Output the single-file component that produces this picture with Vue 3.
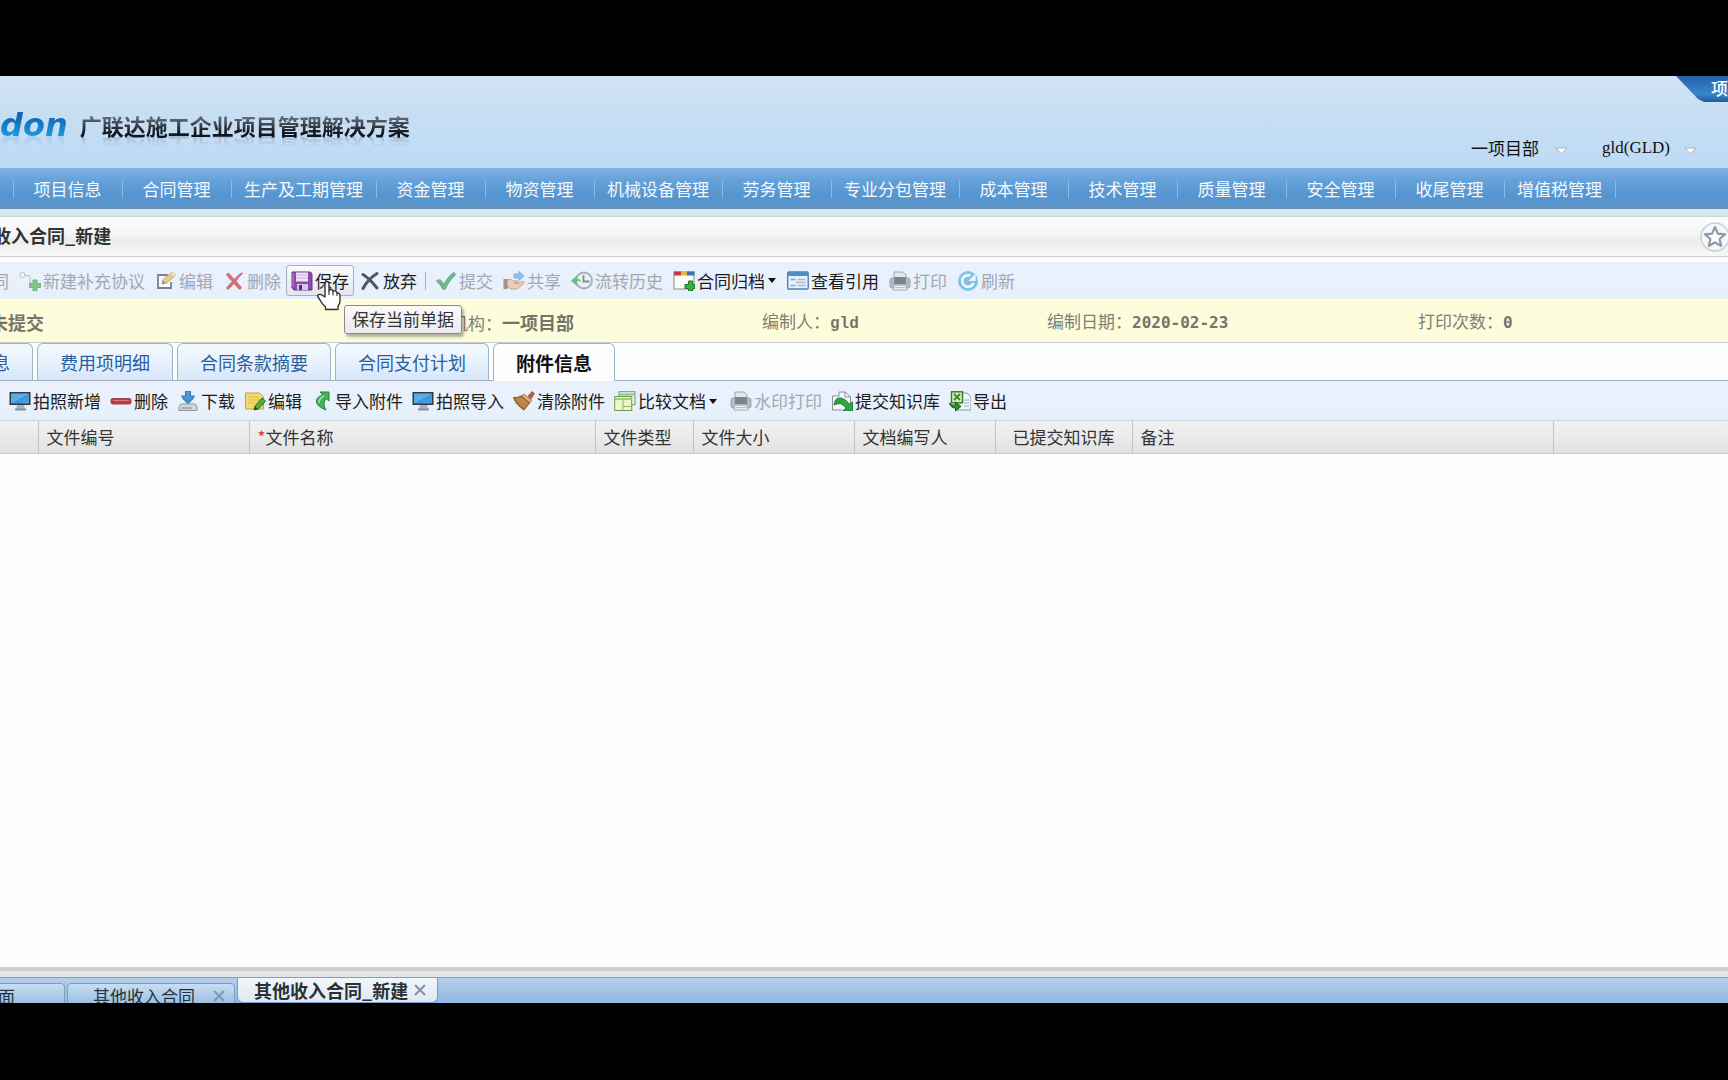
<script setup>
const navItems = [
  '项目信息', '合同管理', '生产及工期管理', '资金管理', '物资管理', '机械设备管理', '劳务管理',
  '专业分包管理', '成本管理', '技术管理', '质量管理', '安全管理', '收尾管理', '增值税管理',
]

const monitor = '<rect x="0.5" y="1" width="21" height="13" fill="#2c3a48"/><rect x="2" y="2.500" width="18" height="10" fill="url(#gScreen)"/><path d="M2 12.500V2.500h18z" fill="#8fcdf5" opacity=".45"/><path d="M8 14h7l1 4H7z" fill="#aab2bb"/><path d="M6 17.500h11v2H6z" fill="#8a939d"/>'
const printer = '<path d="M5 1h9l3 3v4H5z" fill="#dfe2e6" stroke="#6d747c"/><rect x="1" y="7" width="20" height="10" rx="2" fill="#8d959e" stroke="#717982"/><rect x="5" y="6" width="12" height="7" fill="#343c45"/><path d="M5 14h12l1 5H4z" fill="#e6e8ea" stroke="#7d848c"/><path d="M6 16.500h10" stroke="#9aa1a8"/>'
const icons = {
  supplement: '<circle cx="3.500" cy="4" r="2.500" fill="#fff" stroke="#8b96a5"/><path d="M6 4.500h3q2 0 2 2V13q0 2 2 2h2" fill="none" stroke="#8b96a5"/><path d="M14 9h4v3.500h3.500v4H18V20h-4v-3.500h-3.500v-4H14z" fill="#3eae3e" stroke="#268a2b"/>',
  editBox: '<path d="M13 4H3v13h13v-6" fill="#fff" stroke="#2e3a47" stroke-width="1.800"/><path d="M7 13l1-4.500L17 1l3.500 3L12 12z" fill="#f0b04a" stroke="#b07c2c"/><path d="M7 13l1-3.500 2.500 2.500z" fill="#39404a"/><path d="M15.500 2.500L17 1l3.500 3-1.500 1.500z" fill="#f3d6a2"/>',
  redX: '<path d="M3 3.500Q5 1 7 3l4.500 5Q15 3 19 1.500q2 0 .5 1.500Q16 6 13.500 10q3 4 5.500 6.500-1 3-3.500 1.500L11 13q-3 3-5 5.500-3 .5-2.500-2Q6 13 9 10.500 5 7 3 3.500z" fill="#cc1624"/>',
  save: '<path d="M1 1h18.500L21 3v16H3l-2-2z" fill="#8a4aae" stroke="#63308a"/><rect x="5" y="1.500" width="12" height="9" fill="#efe3f6"/><path d="M5 4h12M5 7h12" stroke="#d0b3e0"/><path d="M6 13h11v6H6z" fill="#d9c2e6"/><path d="M8 14h3v5H8z" fill="#5b2a80"/><path d="M2 2v14" stroke="#bd8bda"/>',
  discard: '<path d="M4 3.500Q10 7 18 17M18 2.500Q9 8 4 17.500" fill="none" stroke="#4a5666" stroke-width="3" stroke-linecap="round"/>',
  check: '<path d="M2 10q2-2 4 0l3 4q4-8 10-12l1 2Q14 9 10 18H8Q6 13 2 10z" fill="#1f9a3e" stroke="#1f8a3d" stroke-width="1.600"/>',
  share: '<path d="M11 3h5V0.500l5 4.500-5 4.500V7h-5z" fill="#4ea3e0" stroke="#2c7fc0" stroke-width=".8"/><path d="M4 9q4-2 7 1h4q1 2-2 2h-2l4 .5 5-2.500q2 1 0 3l-6 5H9l-5-2z" fill="#efb987" stroke="#a8713f"/><rect x="0.500" y="8" width="4" height="10" fill="#6e564a"/>',
  history: '<circle cx="13" cy="9.500" r="8" fill="#eef1f4" stroke="#77828d" stroke-width="1.800"/><path d="M12.500 4v6.500h6" fill="none" stroke="#414b56" stroke-width="1.800"/><path d="M0 10l6-6v3.500q4 .5 4 3.500-2-1.500-4-1v5z" fill="#1f9a38"/>',
  archive: '<rect x="1" y="1" width="20" height="17" fill="#fcfcf8" stroke="#898c80"/><rect x="1" y="0.500" width="7" height="4" fill="#c23d3d"/><rect x="8" y="0.500" width="6" height="4" fill="#e4b43a"/><rect x="14" y="0.500" width="7.500" height="4" fill="#4370ba"/><path d="M15.500 10h4v3.500H22v4h-2.500V20h-4v-2.500H12v-4h3.500z" fill="#3eae3e" stroke="#207a25"/>',
  view: '<rect x="0.700" y="1" width="20.500" height="17" rx="1" fill="#e6f1fb" stroke="#4c82ad" stroke-width="1.400"/><rect x="1" y="1" width="20" height="4" fill="#4b8fc5"/><path d="M3.500 8.500h5M3.500 14.500h5" stroke="#88a8c4" stroke-width="1.500"/><path d="M10.500 8.500h8M8.500 11.500h10M10.500 14.500h8" stroke="#a9bccd" stroke-width="1.500"/>',
  print: printer,
  refresh: '<circle cx="11" cy="10" r="10" fill="#3fa3da"/><circle cx="11" cy="10" r="5.800" fill="none" stroke="#fff" stroke-width="2.600" stroke-dasharray="27 10" transform="rotate(20 11 10)"/><path d="M18.500 3v7h-7z" fill="#fff"/>',
  monitor,
  minus: '<rect x="1" y="7.500" width="20" height="5.500" rx="1.500" fill="#c03540" stroke="#9c4a54"/><path d="M3 9.500h16" stroke="#dc7a82"/>',
  download: '<path d="M8.500 0h5v5h4L11 11.500 4.500 5h4z" fill="#4a9ad6" stroke="#2c76ae"/><path d="M5.500 6.500L11 12l5.500-5.500" fill="none" stroke="#3c8bc6" stroke-width="2"/><path d="M4 13h14l2 3v3.500H2V16z" fill="#d4d8dd" stroke="#8c939b" stroke-linejoin="round"/><path d="M4.500 17h10" stroke="#7c838b"/>',
  note: '<path d="M1.500 2h14l4 4v12h-18z" fill="#f3dc6b" stroke="#c2a238"/><path d="M4 6h11M4 9h11M4 12h7" stroke="#d9bd55"/><path d="M10 19l1-4 7-8 3.500 3-7 8z" fill="#57ad36" stroke="#2f6c1c"/><path d="M10 19l1-3.500 2.500 2.500z" fill="#333"/>',
  importArrow: '<path d="M9 1h9v9l-3-2.500q-4 5 0 11.500Q4 15 5.500 8.500 7 5 12 4z" fill="#3fb25a" stroke="#278643"/><path d="M8 12q0-5 5-7" fill="none" stroke="#a3e3ae" stroke-width="1.500"/>',
  broom: '<path d="M15 5l4-4.500 2.500 2L18 8z" fill="#c4554a" stroke="#8c5a3a" stroke-width=".7"/><path d="M11 3l8 6.500-2.500 2.500-8.500-7z" fill="#d9b072" stroke="#8a5a2c" stroke-width=".7"/><path d="M8 5l8.500 7L11 19Q3 14 0.500 6.500q4 .5 7.500-1.500z" fill="#b5793f" stroke="#7e5026"/><path d="M4 8l7.500 8M6 7l7 7.500M8.500 7l6 6" stroke="#cf9c60"/>',
  compare: '<rect x="5" y="0.700" width="16" height="13" fill="#eaf6e6" stroke="#5ba36b"/><path d="M5 3.500h16" stroke="#8cc49a" stroke-width="2"/><rect x="0.700" y="5.500" width="17" height="14" fill="#eef6c9" stroke="#6d9b4b"/><path d="M1 8h17" stroke="#a3c87e" stroke-width="2"/><path d="M9 9v10M9 15.500h8" stroke="#8bb36b"/>',
  submitLib: '<path d="M1.500 5V19h18V6l-5-5H8v4z" fill="#f4f6f7" stroke="#8b9298"/><path d="M14 1v5h6" fill="none" stroke="#8b9298"/><path d="M3 14q1-8 7-7 5 1 8 6l3.500-2V20H12l3-3q-3-4-6-4.500-3 0-6 1.500z" fill="#2fa443" stroke="#22813a"/>',
  exportXls: '<path d="M11 2h7l4 4v13H8V10z" fill="#f2f5f8" stroke="#8296a8"/><path d="M15 9h5M15 12h5M15 15h5" stroke="#9eb0c0"/><rect x="2.500" y="0.800" width="11" height="11" fill="#d6efb2" stroke="#307a25" stroke-width="1.400"/><path d="M5 3l6 6M11 3L5 9" stroke="#3a8c2a" stroke-width="1.800"/><path d="M0.500 12q3 3 6 2v-3l5.500 4.500L6.500 20v-3q-5 0-6-5z" fill="#2d8f28" stroke="#14601a"/>',
}

const billActions = [
  { label: '新建补充协议', icon: 'supplement', off: true },
  { label: '编辑', icon: 'editBox', off: true },
  { label: '删除', icon: 'redX', off: true },
  { label: '保存', icon: 'save', hover: true, tip: '保存当前单据' },
  { label: '放弃', icon: 'discard', sep: true },
  { label: '提交', icon: 'check', off: true },
  { label: '共享', icon: 'share', off: true },
  { label: '流转历史', icon: 'history', off: true },
  { label: '合同归档', icon: 'archive', menu: true },
  { label: '查看引用', icon: 'view' },
  { label: '打印', icon: 'print', off: true },
  { label: '刷新', icon: 'refresh', off: true },
]

const fileActions = [
  { label: '拍照新增', icon: 'monitor' },
  { label: '删除', icon: 'minus' },
  { label: '下载', icon: 'download' },
  { label: '编辑', icon: 'note' },
  { label: '导入附件', icon: 'importArrow' },
  { label: '拍照导入', icon: 'monitor' },
  { label: '清除附件', icon: 'broom' },
  { label: '比较文档', icon: 'compare', menu: true },
  { label: '水印打印', icon: 'print', off: true },
  { label: '提交知识库', icon: 'submitLib' },
  { label: '导出', icon: 'exportXls' },
]

const tabs = ['费用项明细', '合同条款摘要', '合同支付计划', '附件信息']
</script>

<template>
  <div class="screen">
    <svg class="defs" width="0" height="0" aria-hidden="true">
      <defs>
        <linearGradient id="gScreen" x1="0" y1="0" x2="1" y2="1">
          <stop offset="0" stop-color="#2f86cc" />
          <stop offset="1" stop-color="#4aa5e6" />
        </linearGradient>
      </defs>
    </svg>
    <div class="app">
      <header class="banner">
        <div class="brand">
          <span class="logo">don</span>
          <h1>广联达施工企业项目管理解决方案</h1>
        </div>
        <div class="account">
          <button type="button">一项目部<svg width="13" height="8" viewBox="0 0 13 8"><path d="M1 1h11L6.500 7z" fill="#fff" stroke="#a9b3bd" /></svg></button>
          <button type="button" class="user">gld(GLD)<svg width="13" height="8" viewBox="0 0 13 8"><path d="M1 1h11L6.500 7z" fill="#fff" stroke="#a9b3bd" /></svg></button>
        </div>
        <div class="corner">项</div>
      </header>

      <nav class="nav">
        <a v-for="n in navItems" :key="n" href="#">{{ n }}</a>
      </nav>

      <div class="titlebar">
        <h2>收入合同_新建</h2>
        <button type="button" class="fav" aria-label="收藏">
          <svg width="30" height="30" viewBox="0 0 30 30">
            <circle cx="15" cy="15" r="14" fill="#f6f7f9" stroke="#cfcfd4" stroke-width="1.500" />
            <path d="M15 5l2.900 6.600 7.100.7-5.400 4.700 1.600 7L15 20.400 8.800 24l1.600-7L5 12.300l7.100-.7z" fill="#fbfcfd" stroke="#8d9cab" stroke-width="2.200" stroke-linejoin="round" />
          </svg>
        </button>
      </div>

      <div class="toolbar bill">
        <button type="button" class="tool off cut" disabled>同</button>
        <template v-for="a in billActions" :key="a.label">
          <button type="button" class="tool" :class="{ off: a.off, hover: a.hover }" :disabled="a.off">
            <svg class="ico" viewBox="0 0 22 20" v-html="icons[a.icon]"></svg>
            <span>{{ a.label }}</span>
            <i v-if="a.menu" class="caret"></i>
            <template v-if="a.tip">
              <span class="tip" role="tooltip">{{ a.tip }}</span>
              <svg class="hand" width="26" height="31" viewBox="0 0 26 31">
                <path d="M9 17V4q0-2.500 2-2.500T13 4v7q0-1.500 1.800-1.500T17 11v1q0-1.500 1.800-1.300T21 12.500v1q3-1 3 2V21q0 3-2 5v3.500H9.500V27Q6 24 4 20l-2-3q-1-2 1-2.500t3.500 1z" fill="#fff" stroke="#333" stroke-width="1.400" stroke-linejoin="round" />
                <path d="M13 11v4M17 12v3.500M21 13.500V16" stroke="#444" stroke-width="1.200" />
                <path d="M10 28.500h11.500" stroke="#bbb" />
              </svg>
            </template>
          </button>
          <span v-if="a.sep" class="sep"></span>
        </template>
      </div>

      <div class="status">
        <div class="state">未提交</div>
        <div>编制机构：<b>一项目部</b></div>
        <div>编制人：<b class="mono">gld</b></div>
        <div>编制日期：<b class="num">2020-02-23</b></div>
        <div>打印次数：<b class="num">0</b></div>
      </div>

      <div class="tabs" role="tablist">
        <button type="button" role="tab" class="tab first">息</button>
        <button v-for="(t, i) in tabs" :key="t" type="button" role="tab" class="tab" :class="{ active: i === 3 }" :aria-selected="i === 3">{{ t }}</button>
      </div>

      <div class="toolbar files">
        <button v-for="a in fileActions" :key="a.label" type="button" class="tool" :class="{ off: a.off }" :disabled="a.off">
          <svg class="ico" viewBox="0 0 22 20" v-html="icons[a.icon]"></svg>
          <span>{{ a.label }}</span>
          <i v-if="a.menu" class="caret"></i>
        </button>
      </div>

      <main class="grid">
        <table>
          <colgroup>
            <col class="c-idx" /><col class="c-no" /><col class="c-name" /><col class="c-type" /><col class="c-size" />
            <col class="c-author" /><col class="c-lib" /><col class="c-memo" /><col />
          </colgroup>
          <thead>
            <tr>
              <th></th>
              <th>文件编号</th>
              <th><em>*</em>文件名称</th>
              <th>文件类型</th>
              <th>文件大小</th>
              <th>文档编写人</th>
              <th class="center">已提交知识库</th>
              <th>备注</th>
              <th></th>
            </tr>
          </thead>
        </table>
      </main>

      <footer class="pages">
        <div class="page home">面</div>
        <div class="page second">
          <span>其他收入合同</span>
          <button type="button" aria-label="关闭"><svg width="12" height="12" viewBox="0 0 12 12"><path d="M1 1l10 10M11 1L1 11" stroke="#8097b5" stroke-width="2" /></svg></button>
        </div>
        <div class="page current">
          <span>其他收入合同_新建</span>
          <button type="button" aria-label="关闭"><svg width="12" height="12" viewBox="0 0 12 12"><path d="M1 1l10 10M11 1L1 11" stroke="#8293a8" stroke-width="2" /></svg></button>
        </div>
      </footer>
    </div>
  </div>
</template>

<style>
body {
  margin: 0;
  background: #000;
}
</style>

<style scoped>
.screen {
  box-sizing: border-box;
  min-height: 100vh;
  padding: 76px 0 77px;
  display: flex;
  flex-direction: column;
  background: #000;
  font-family: "Noto Sans CJK SC", "Liberation Sans", sans-serif;
  font-size: 17px;
  line-height: 24px;
  color: #222;
}
.defs {
  position: absolute;
}
.app {
  flex: 1;
  display: flex;
  flex-direction: column;
  overflow: hidden;
  background: #fdfdfd;
}
button {
  margin: 0;
  padding: 0;
  border: 0;
  background: none;
  font: inherit;
  color: inherit;
  white-space: nowrap;
}
h1, h2 {
  margin: 0;
}

/* banner */
.banner {
  position: relative;
  height: 92px;
  display: flex;
  justify-content: space-between;
  background: linear-gradient(#d3e3f5, #c8dff2 35%, #bddaf6);
}
.brand {
  display: flex;
  align-items: center;
  gap: 12px;
  padding-top: 6px;
}
.logo {
  font: italic bold 32px/32px "DejaVu Sans", sans-serif;
  background: linear-gradient(#1267b4 25%, #1d95dd 80%);
  background-clip: text;
  color: transparent;
  -webkit-box-reflect: below -10px linear-gradient(transparent 50%, rgba(0, 0, 0, .25));
}
h1 {
  font-size: 22px;
  line-height: 32px;
  font-weight: 700;
  background: linear-gradient(#6d7682 20%, #10161d 75%);
  background-clip: text;
  color: transparent;
  -webkit-box-reflect: below -10px linear-gradient(transparent 50%, rgba(0, 0, 0, .25));
}
.account {
  display: flex;
  align-items: flex-end;
  gap: 34px;
  padding: 0 31px 8px 0;
  color: #111;
}
.account button {
  display: flex;
  align-items: center;
  gap: 16px;
}
.account svg {
  margin-top: 6px;
}
.account .user {
  font-family: "Liberation Serif", serif;
  gap: 14px;
}
.corner {
  position: absolute;
  top: 0;
  right: 0;
  width: 17px;
  height: 26px;
  padding-left: 35px;
  overflow: hidden;
  clip-path: polygon(0 0, 100% 0, 100% 100%, 28px 100%, 22px 23px);
  background: linear-gradient(#2462a8, #3a86cb 70%, #1d5c9f);
  color: #fff;
  font-weight: 500;
  line-height: 24px;
}

/* main navigation */
.nav {
  display: flex;
  align-items: center;
  height: 41px;
  padding-left: 13px;
  background: linear-gradient(#7fb3e4, #66a2da 28%, #5594cf 70%, #5b97cd 90%, #6c8eb4);
  border-bottom: 7px solid #d2e8ee;
}
.nav::before {
  content: "";
  width: 1px;
  height: 18px;
  background: #8dbbe6;
}
.nav a {
  box-sizing: border-box;
  min-width: 109px;
  padding: 0 13px 0 12px;
  text-align: center;
  color: #f2f9ff;
  text-decoration: none;
  line-height: 18px;
  border-right: 1px solid #8dbbe6;
  white-space: nowrap;
}

/* title bar */
.titlebar {
  display: flex;
  align-items: center;
  justify-content: space-between;
  height: 39px;
  border-top: 1px solid #d4d4d4;
  border-bottom: 1px solid #d3cfcd;
  margin-bottom: 5px;
  background: linear-gradient(#fdfdfd, #f5f5f5 45%, #ececec 60%, #f8f8f8);
}
.titlebar h2 {
  margin-left: -7px;
  padding-bottom: 4px;
  font-size: 18px;
  line-height: 24px;
  font-weight: 700;
  color: #333;
}
.fav {
  height: 30px;
  margin-right: -2px;
}

/* toolbars */
.toolbar {
  display: flex;
  align-items: center;
  background: linear-gradient(#eaf1fd, #e6f0fb);
}
.bill {
  height: 37px;
  margin-bottom: 1px;
}
.files {
  height: 40px;
  padding: 1px 0 0 5px;
  border-bottom: 1px solid #ccd5df;
  box-sizing: border-box;
}
.tool {
  position: relative;
  display: flex;
  align-items: center;
  gap: 2px;
  box-sizing: border-box;
  height: 31px;
  padding: 0 4px;
  border: 1px solid transparent;
  border-radius: 3px;
  color: #1c1c1c;
}
.files .tool {
  padding: 0 4px 0 3px;
}
.tool.off {
  color: #a2a8b2;
}
.tool.off .ico {
  opacity: .6;
}
.tool.cut {
  margin-left: -13px;
}
.tool.hover {
  border-color: #a9adb8;
  background: linear-gradient(#fbfbfd, #e4e5ee);
}
.ico {
  width: 22px;
  height: 20px;
  flex: none;
}
.caret {
  border: 4px solid transparent;
  border-top: 5px solid #111;
  border-bottom: 0;
  margin: 0 1px;
}
.files .caret {
  margin-right: 4px;
}
.sep {
  width: 1px;
  height: 18px;
  margin: 0 4px 0 3px;
  background: #aab0ba;
}
.tip {
  position: absolute;
  left: 57px;
  top: 39px;
  z-index: 2;
  padding: 1px 7px 2px;
  border: 1px solid #8a8a8a;
  border-radius: 3px;
  background: linear-gradient(#fbfbfb, #e9e9ee);
  box-shadow: 2px 3px 3px rgba(0, 0, 0, .3);
  color: #333;
}
.hand {
  position: absolute;
  left: 29px;
  top: 14px;
  z-index: 3;
}

/* document status */
.status {
  display: grid;
  grid-template-columns: 417fr 345fr 285fr 371fr 310fr;
  align-items: center;
  box-sizing: border-box;
  height: 43px;
  padding-top: 2px;
  border-bottom: 1px solid #c3cccb;
  background: #fdfddc;
  color: #7f7f74;
  white-space: nowrap;
}
.status b, .state {
  font-size: 18px;
  font-weight: 700;
  color: #74746a;
}
.state {
  margin-left: -10px;
}
.status b.mono {
  font-family: "Liberation Mono", monospace;
  font-size: 16px;
}
.status b.num {
  font-family: "DejaVu Sans Mono", monospace;
  font-size: 16px;
}

/* tabs */
.tabs {
  display: flex;
  gap: 4px;
  height: 37px;
  border-bottom: 1px solid #a3afbb;
  background: #fcfdfd;
}
.tab {
  box-sizing: border-box;
  height: 37px;
  padding: 0 22px;
  border: 1px solid #9db6c8;
  border-bottom: 0;
  border-radius: 6px 6px 0 0;
  background: linear-gradient(#f3f9fe, #e9f2fd 50%, #d6e5fb);
  font-size: 18px;
  color: #2a5f9e;
}
.tab.first {
  margin-left: -31px;
}
.tab.active {
  height: 38px;
  background: #fdfdfe;
  font-size: 19px;
  font-weight: 700;
  color: #111;
}

/* attachment grid */
.grid {
  flex: 1;
  border-bottom: 4px solid #cfcfd1;
}
table {
  width: 100%;
  table-layout: fixed;
  border-collapse: collapse;
}
th {
  box-sizing: border-box;
  height: 32px;
  padding: 0 8px;
  border-right: 1px solid #c2c2c2;
  border-bottom: 1px solid #cccccc;
  background: linear-gradient(#f2f1f1, #e2e2e2);
  font-weight: 400;
  text-align: left;
  white-space: nowrap;
  color: #333;
}
th:last-child {
  border-right: 0;
}
th.center {
  text-align: center;
}
th em {
  font-style: normal;
  color: #e03030;
}
.c-idx { width: 38px; }
.c-no { width: 211px; }
.c-name { width: 346px; }
.c-type { width: 98px; }
.c-size { width: 161px; }
.c-author { width: 141px; }
.c-lib { width: 137px; }
.c-memo { width: 421px; }

/* open pages */
.pages {
  display: flex;
  align-items: flex-start;
  height: 25px;
  margin-top: 6px;
  border-top: 1px solid #7d9cc4;
  background: linear-gradient(#b4cfea, #8fb9e0);
  box-shadow: 0 -6px 0 #dfe7ed;
}
.page {
  display: flex;
  align-items: center;
  box-sizing: border-box;
  height: 26px;
  border: 1px solid #7c9cc4;
  border-radius: 4px 4px 0 0;
  background: linear-gradient(#c8def2, #8fb9df);
  color: #26323f;
  white-space: nowrap;
}
.page button {
  display: flex;
}
.home {
  width: 69px;
  margin: 5px 2px 0 -4px;
  padding-left: 1px;
}
.second {
  width: 168px;
  margin-top: 5px;
  padding-left: 25px;
  gap: 18px;
}
.current {
  width: 201px;
  height: 25px;
  margin-left: 2px;
  padding-left: 16px;
  gap: 6px;
  border-top: 0;
  border-radius: 0 0 6px 6px;
  background: linear-gradient(#f2f6f9, #dde9f2);
  font-size: 18px;
  font-weight: 700;
  color: #2b2f36;
}
</style>
